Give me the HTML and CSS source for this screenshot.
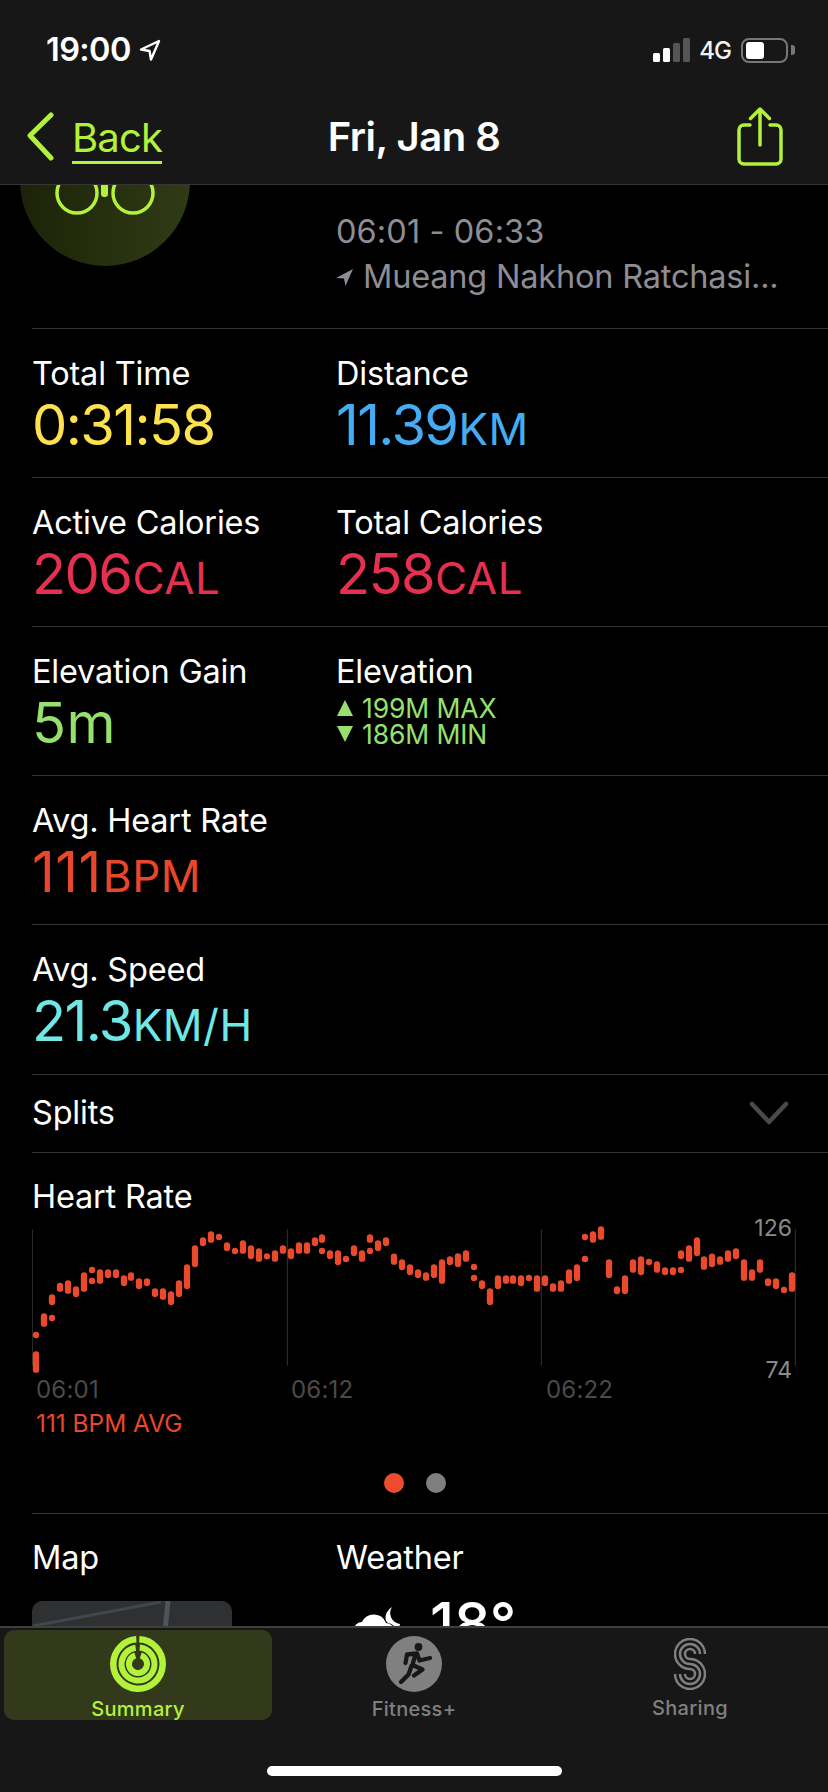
FILE: index.html
```html
<!DOCTYPE html>
<html lang="en">
<head>
<meta charset="utf-8">
<title>Fri, Jan 8</title>
<link rel="stylesheet" href="styles.css">
</head>
<body>
<div class="app">
  <header class="header">
    <div class="status">
      <div class="status-left">
        <span class="clock">19:00</span>
        <svg class="loc-outline" width="24" height="24" viewBox="0 0 24 24"><path d="M21 3 3 11.500l8.500 1.500 1.500 8.500z" fill="none" stroke="#fff" stroke-width="2.400" stroke-linejoin="round"/></svg>
      </div>
      <div class="status-right">
        <div class="signal"><i class="bar b1"></i><i class="bar b2"></i><i class="bar b3 off"></i><i class="bar b4 off"></i></div>
        <span class="net">4G</span>
        <div class="battery"><i class="battery-fill"></i></div>
        <i class="battery-nub"></i>
      </div>
    </div>
    <nav class="nav">
      <div class="nav-left">
        <svg class="chev" width="30" height="50" viewBox="0 0 30 50"><path d="M25 3 4 23.500 25 46" fill="none" stroke="#b3f23a" stroke-width="5" stroke-linecap="round" stroke-linejoin="round"/></svg>
        <span class="back">Back</span>
      </div>
      <div class="title">Fri, Jan 8</div>
      <div class="nav-right">
        <svg width="48" height="62" viewBox="0 0 48 62"><path d="M14 19H8a5 5 0 0 0-5 5v29a5 5 0 0 0 5 5h32a5 5 0 0 0 5-5V24a5 5 0 0 0-5-5h-6M24 39V4M14.500 12.500 24 3l9.500 9.500" fill="none" stroke="#b3f23a" stroke-width="3.500" stroke-linecap="round" stroke-linejoin="round"/></svg>
      </div>
    </nav>
  </header>

  <main class="content">
    <section class="hero">
      <div class="avatar">
        <svg class="glasses" width="108" height="50" viewBox="0 0 108 50"><circle cx="26" cy="22" r="20" fill="none" stroke="#b3f23a" stroke-width="3.500"/><circle cx="82" cy="22" r="20" fill="none" stroke="#b3f23a" stroke-width="3.500"/><rect x="50" y="0" width="7" height="26" rx="3" fill="#b3f23a"/></svg>
      </div>
      <div class="hero-info">
        <div class="hero-line hero-time">06:01 - 06:33</div>
        <div class="hero-line hero-loc">
          <svg width="17" height="18" viewBox="0 0 17 18"><path d="M17 1 0 10l8 .5L9.500 18z" fill="#8d8d93"/></svg>
          <span>Mueang Nakhon Ratchasi...</span>
        </div>
      </div>
    </section>

    <section class="row">
      <div class="cell"><div class="label">Total Time</div><div class="value yellow">0:31:58</div></div>
      <div class="cell"><div class="label">Distance</div><div class="value blue">11.39<span class="unit">KM</span></div></div>
    </section>
    <section class="row">
      <div class="cell"><div class="label">Active Calories</div><div class="value pink">206<span class="unit">CAL</span></div></div>
      <div class="cell"><div class="label">Total Calories</div><div class="value pink">258<span class="unit">CAL</span></div></div>
    </section>
    <section class="row">
      <div class="cell"><div class="label">Elevation Gain</div><div class="value green loose">5m</div></div>
      <div class="cell">
        <div class="label">Elevation</div>
        <div class="elev-list">
          <div class="elev"><i class="tri tri-up"></i><span>199M MAX</span></div>
          <div class="elev"><i class="tri tri-down"></i><span>186M MIN</span></div>
        </div>
      </div>
    </section>
    <section class="row">
      <div class="cell"><div class="label">Avg. Heart Rate</div><div class="value orange"><span class="loose">111</span><span class="unit">BPM</span></div></div>
    </section>
    <section class="row row-tall">
      <div class="cell"><div class="label">Avg. Speed</div><div class="value cyan">21.3<span class="unit">KM/H</span></div></div>
    </section>
    <section class="splits">
      <span class="label">Splits</span>
      <svg width="40" height="24" viewBox="0 0 40 24"><path d="M3 3 20 21 37 3" fill="none" stroke="#4a4a4a" stroke-width="4.500" stroke-linecap="round" stroke-linejoin="round"/></svg>
    </section>

    <section class="hr">
      <div class="label">Heart Rate</div>
      <div class="chart">
        <svg class="chart-svg" width="796" height="157" viewBox="96 114 2388 471">
          <path d="M97 148V557M862 148V557M1624 148V557M2386 148V557" stroke="#333" stroke-width="3" fill="none"/>
          <path fill="none" stroke="#ea4a2c" stroke-width="19" stroke-linecap="round" d="M108 465v.1M108 523V569M132 409V431M156 414v.1M156 352V366M180 318V326M204 310V332M228 328V342M252 286V326M276 270v.1M276 303v.1M300 277V302M324 277V285M348 277V285M372 295V309M393 286V293M417 304V318M441 304V309M465 334V342M489 334V350M513 343V366M537 310V342M561 262V318M585 205V252M609 181V189M633 163V179M657 171v.1M681 196V204M705 213v.1M729 190V212M753 205V228M777 214V236M801 229v.1M825 220V236M849 205V212M873 214V228M897 196V212M921 196V212M945 181V189M966 172V179M966 213v.1M990 220V228M1014 220V246M1038 237v.1M1062 205V219M1086 220V236M1110 172V179M1110 213v.1M1134 190V204M1158 181V189M1182 230V245M1206 247V261M1230 262V276M1254 277V285M1278 286V293M1302 262V285M1326 247V302M1350 238V246M1374 229V252M1398 220V236M1422 261v.1M1422 294v.1M1446 310V318M1470 334V366M1494 295V318M1518 295V302M1539 295V302M1563 295V309M1587 294v.1M1611 295V326M1635 295V309M1659 319V326M1683 310V326M1707 277V302M1731 262V294M1755 171v.1M1755 237v.1M1779 163V179M1803 148V170M1827 247V285M1851 328V333M1875 295V333M1899 247V269M1923 238V276M1947 246v.1M1971 253V269M1995 271V276M2019 271V276M2043 270v.1M2043 220V228M2067 205V236M2091 181V219M2112 238V260M2136 230V252M2160 238V245M2184 220V236M2208 214V228M2232 247V293M2256 277V293M2280 247V269M2304 304V309M2328 304V318M2352 330v.1M2376 286V326"/>
        </svg>
        <span class="axis-y axis-top">126</span>
        <span class="axis-y axis-bottom">74</span>
      </div>
      <div class="axis-x"><span>06:01</span><span>06:12</span><span>06:22</span></div>
      <div class="avg">111 BPM AVG</div>
      <div class="pager"><i class="dot dot-on"></i><i class="dot"></i></div>
    </section>

    <section class="bottom">
      <div class="cell">
        <div class="label">Map</div>
        <div class="map">
          <svg width="200" height="30" viewBox="0 0 200 30"><path d="M1 25 129 1" stroke="#43464a" stroke-width="3" fill="none"/><path d="M136 0 133 30" stroke="#50545a" stroke-width="5" fill="none"/></svg>
        </div>
      </div>
      <div class="cell">
        <div class="label">Weather</div>
        <div class="weather">
          <svg class="wx" width="48" height="40" viewBox="0 0 48 40"><path d="M0 24a8 8 0 0 1 8-8 13 13 0 0 1 24 1 9 9 0 0 1 9 9v14H0z" fill="#fff"/><path d="M38 1a12 12 0 0 0-6 14l2 2a9 9 0 0 1 8 8 11 11 0 0 0 4-7A11 11 0 0 1 38 1z" fill="#fff"/></svg>
          <span class="temp">18°</span>
        </div>
      </div>
    </section>
  </main>

  <footer class="tabbar">
    <div class="tabs">
      <div class="tab tab-active">
        <svg class="tab-icon" width="56" height="56" viewBox="0 0 56 56">
          <g fill="none" stroke="#b3f23a">
            <circle cx="28" cy="28" r="24.700" stroke-width="6.500" pathLength="100" stroke-dasharray="98 2" transform="rotate(-87 28 28)"/>
            <circle cx="28" cy="28" r="16.500" stroke-width="6" pathLength="100" stroke-dasharray="96 4" transform="rotate(-84 28 28)"/>
            <circle cx="28" cy="28" r="9" stroke-width="6" pathLength="100" stroke-dasharray="90 10" transform="rotate(-72 28 28)"/>
          </g>
        </svg>
        <span class="tab-label">Summary</span>
      </div>
      <div class="tab">
        <svg class="tab-icon" width="56" height="56" viewBox="0 0 56 56">
          <circle cx="28" cy="28" r="28" fill="#808080"/>
          <circle cx="32.500" cy="11" r="3.900" fill="#171717"/>
          <path d="M19.500 27 21 18.500l10-1 2.500 7L44 22M29.500 18l-3 11 10 4.500-8.500 6M25.500 30l-3 8.500L15 46" fill="none" stroke="#171717" stroke-width="4.300" stroke-linecap="round" stroke-linejoin="round"/>
        </svg>
        <span class="tab-label">Fitness+</span>
      </div>
      <div class="tab">
        <span class="tab-icon">
          <svg width="32" height="52" viewBox="0 0 32 52"><path d="M31 16A15 15 0 1 0 16 31 5 5 0 1 1 11 36M26 16A10 10 0 1 0 16 26 10 10 0 1 1 6 36M21 16A5 5 0 1 0 16 21 15 15 0 1 1 1 36" fill="none" stroke="#808080" stroke-width="2.500"/></svg>
        </span>
        <span class="tab-label">Sharing</span>
      </div>
    </div>
    <div class="home"></div>
  </footer>
</div>
</body>
</html>
```
FILE: styles.css
```css
* { box-sizing: border-box; }
html, body { margin: 0; padding: 0; background: #000; }
body { font-family: Inter, "Liberation Sans", sans-serif; color: #fff; }
i { display: block; font-style: normal; }
svg { display: block; flex: none; }

.app { width: 828px; height: 1792px; display: flex; flex-direction: column; overflow: hidden; }

/* header */
.header { height: 185px; flex: none; background: #171717; border-bottom: 1px solid #363636; }
.status { height: 100px; display: flex; justify-content: space-between; align-items: center; padding: 0 33px 0 46px; }
.status-left { display: flex; align-items: center; gap: 7px; }
.clock { font-size: 32.500px; font-weight: 600; letter-spacing: -0.6px; line-height: 36px; }
.status-right { display: flex; align-items: center; }
.signal { display: flex; align-items: flex-end; gap: 3px; height: 24px; }
.bar { width: 7px; background: #fff; border-radius: 1.500px; }
.bar.off { background: #555; }
.b1 { height: 9px; }
.b2 { height: 14px; }
.b3 { height: 19px; }
.b4 { height: 24px; }
.net { font-size: 24px; font-weight: 500; letter-spacing: -1px; margin: 0 10px 0 9px; color: #f2f2f2; }
.battery { width: 47px; height: 25px; border: 2.500px solid #777; border-radius: 8px; padding: 2px 3px; }
.battery-fill { width: 18px; height: 100%; background: #fff; border-radius: 3px; }
.battery-nub { width: 4px; height: 10px; margin-left: 3px; background: #777; border-radius: 0 3px 3px 0; }

.nav { height: 74px; display: grid; grid-template-columns: 1fr auto 1fr; align-items: center; }
.nav-left { display: flex; align-items: center; gap: 16px; padding-left: 26px; color: #b3f23a; }
.back { font-size: 40px; letter-spacing: -0.8px; line-height: 48px; border-bottom: 3px solid #b3f23a; height: 50px; margin-top: 4px; }
.title { font-size: 40px; font-weight: 600; letter-spacing: -0.5px; line-height: 48px; }
.nav-right { display: flex; justify-content: flex-end; padding-right: 44px; }

/* scrolling content */
.content { flex: 1; min-height: 0; overflow: hidden; background: #000; }
.hero { height: 144px; margin-left: 32px; display: flex; gap: 146px; border-bottom: 1px solid #333; }
.avatar { width: 170px; height: 170px; margin: -89px 0 0 -12px; flex: none; border-radius: 50%; background: linear-gradient(90deg, #1c2308, #303b15); display: flex; justify-content: center; padding-top: 75px; }
.glasses { flex: none; }
.hero-info { padding-top: 24px; color: #8d8d93; min-width: 0; }
.hero-line { font-size: 32.500px; letter-spacing: -0.2px; line-height: 45px; white-space: nowrap; }
.hero-time { letter-spacing: 0.1px; }
.hero-loc { display: flex; align-items: center; gap: 10px; }

.row { height: 149px; margin-left: 32px; padding-top: 24px; display: grid; grid-template-columns: 304px 1fr; border-bottom: 1px solid #333; }
.row-tall { height: 150px; }
.label { font-size: 32.500px; line-height: 42px; letter-spacing: -0.2px; color: #fff; }
.value { font-size: 56px; line-height: 60px; letter-spacing: -1.600px; white-space: nowrap; font-weight: 380; }
.loose { letter-spacing: 0.5px; }
.unit { font-size: 44px; letter-spacing: 0.5px; margin-left: 1px; font-weight: 420; }
.yellow { color: #fde24f; }
.blue { color: #45acf2; }
.pink { color: #e5304f; }
.green { color: #97e06e; }
.orange { color: #e9472c; }
.cyan { color: #6ee7e5; }

.elev-list { margin-top: 2px; padding-left: 1px; }
.elev { display: flex; align-items: center; gap: 9px; height: 26px; color: #97e06e; font-size: 26.500px; line-height: 26px; letter-spacing: -0.1px; }
.tri { width: 0; height: 0; border-left: 8.500px solid transparent; border-right: 8.500px solid transparent; }
.tri-up { border-bottom: 16px solid #97e06e; }
.tri-down { border-top: 16px solid #97e06e; }

.splits { height: 78px; margin-left: 32px; padding: 0 39px 2px 0; display: flex; justify-content: space-between; align-items: center; border-bottom: 1px solid #333; }

.hr { height: 361px; margin-left: 32px; padding-top: 23px; border-bottom: 1px solid #333; }
.chart { position: relative; height: 158px; }
.axis-y { position: absolute; right: 36px; font-size: 23px; line-height: 28px; color: #8a8a8a; }
.axis-top { top: -4px; }
.axis-bottom { top: 138px; }
.axis-x { display: grid; grid-template-columns: 255px 255px 255px; padding-left: 4px; font-size: 24px; line-height: 28px; letter-spacing: 0.2px; color: #4a4a4a; }
.avg { margin-top: 5px; padding-left: 4px; font-size: 24.400px; line-height: 28px; color: #e9472c; }
.pager { display: flex; justify-content: center; gap: 22px; margin: 36px 0 0 -30px; }
.dot { width: 20px; height: 20px; border-radius: 50%; background: #7f7f7f; }
.dot-on { background: #ef4b2e; }

.bottom { margin-left: 32px; padding-top: 23px; display: grid; grid-template-columns: 304px 1fr; }
.map { width: 200px; height: 120px; margin-top: 22px; background: #2e3032; border-radius: 10px; }
.weather { display: flex; gap: 28px; margin: 16px 0 0 18px; }
.wx { margin-top: 11px; }
.temp { font-size: 58px; line-height: 56px; font-weight: 500; }

/* tab bar */
.tabbar { height: 166px; flex: none; background: #171717; border-top: 2px solid #3f3f3f; padding-top: 2px; }
.tabs { display: grid; grid-template-columns: repeat(3, 1fr); }
.tab { height: 90px; margin: 0 4px; padding-top: 6px; display: flex; flex-direction: column; align-items: center; gap: 5px; border-radius: 10px; color: #808080; }
.tab-active { background: #33391b; color: #b3f23a; }
.tab-icon { height: 56px; display: flex; align-items: center; }
.tab-label { font-size: 20px; font-weight: 500; line-height: 24px; letter-spacing: 0.3px; }
.home { width: 295px; height: 10px; margin: 46px auto 0; background: #fff; border-radius: 5px; }
```
